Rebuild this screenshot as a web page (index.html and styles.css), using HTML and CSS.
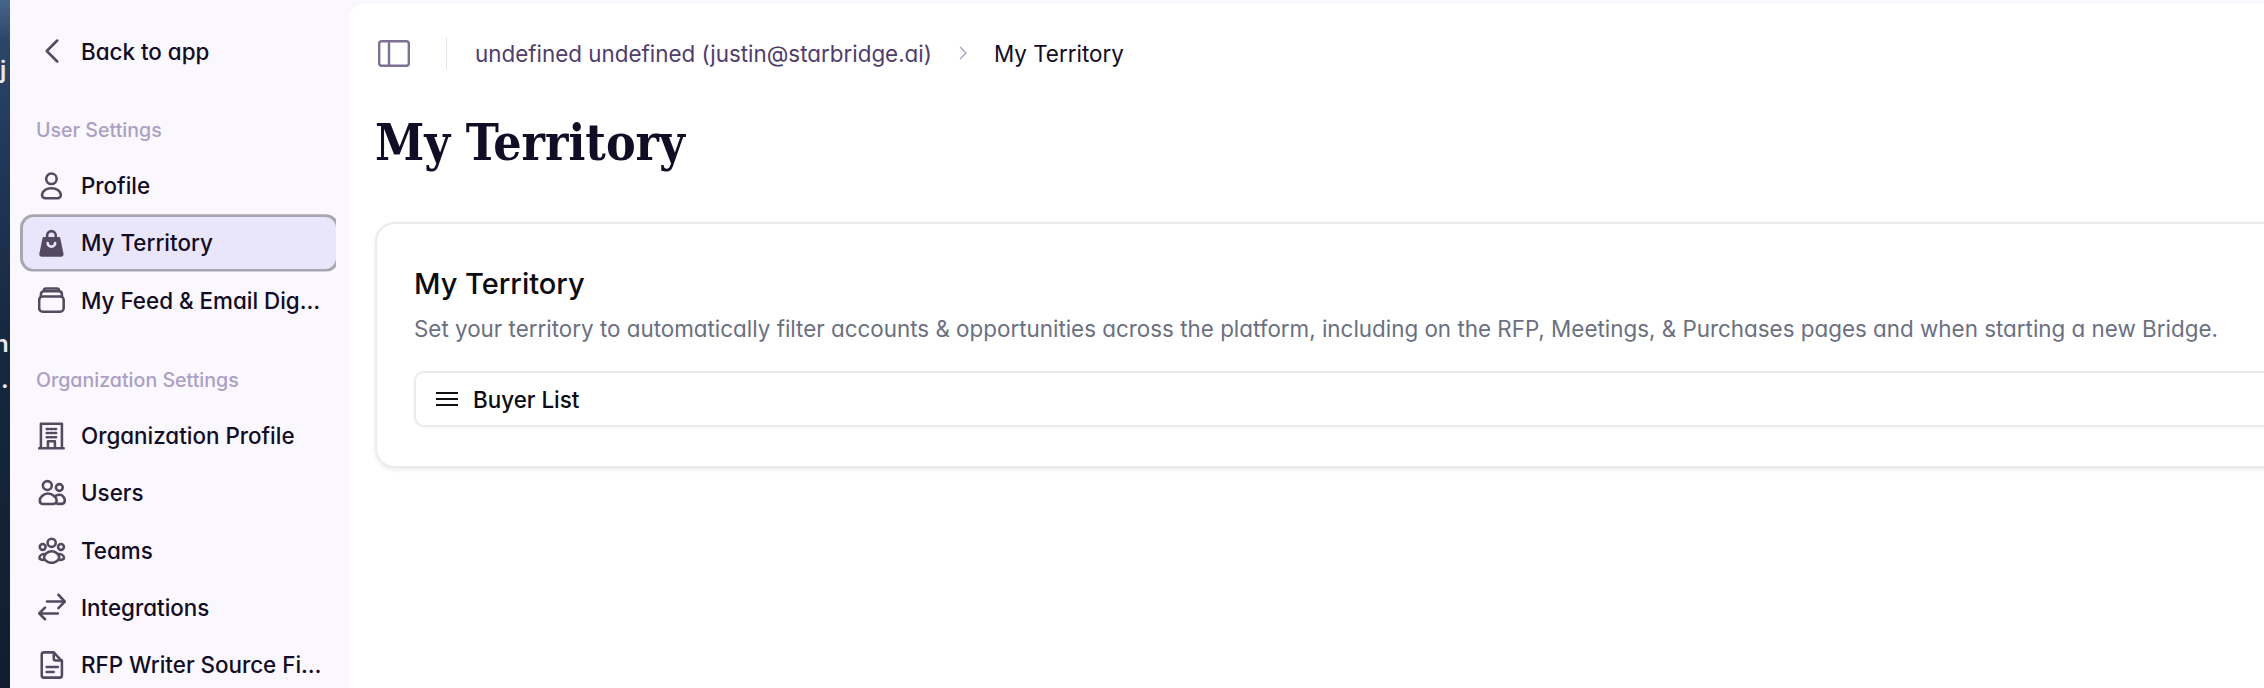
FILE: index.html
```html
<!DOCTYPE html>
<html lang="en">
<head>
    <meta charset="UTF-8">
    <meta name="viewport" content="width=device-width, initial-scale=1.0">
    <title>My Territory</title>
    <link rel="stylesheet" href="styles.css">
</head>
<body>
    <div class="desktop">
        <span class="desktop-char desktop-j">j</span>
        <span class="desktop-char desktop-n">n</span>
        <span class="desktop-char desktop-dot">.</span>
    </div>
    <aside class="sidebar">
        <a class="nav-item back">
            <svg class="icon" viewBox="0 0 24 24"><path d="M16.500 3l-9 9 9 9"/></svg>
            <span>Back to app</span>
        </a>
        <div class="group-label first">User Settings</div>
        <a class="nav-item">
            <svg class="icon" viewBox="0 0 24 24"><circle cx="11.500" cy="5.800" r="4.500"/><path d="M11.500 14c-4 0-7 2-8 5-.5 2 1 3.500 3 3.500h10c2 0 3.500-1.500 3-3.500-1-3-4-5-8-5z"/></svg>
            <span>Profile</span>
        </a>
        <a class="nav-item active">
            <svg class="icon" viewBox="0 0 24 24"><path class="solid" d="M5 8h13l2.800 13.500c.1.700-.4 1.200-1.100 1.200H3.300c-.7 0-1.200-.5-1.100-1.200z"/><path d="M7.800 8V5.500a3.700 3.700 0 0 1 7.400 0V8"/><path class="cut" d="M8.300 12a3.200 3.200 0 0 0 6.400 0"/></svg>
            <span>My Territory</span>
        </a>
        <a class="nav-item">
            <svg class="icon" viewBox="0 0 24 24"><rect x="1" y="9" width="21" height="13" rx="3"/><path d="M2.500 9V7C2.500 5.500 3.500 4.500 5 4.500h13c1.500 0 2.500 1 2.500 2.500v2M5 4.500V4c0-1 .7-1.800 1.800-1.800h9.400c1.100 0 1.800.8 1.800 1.800v.5"/></svg>
            <span class="truncate">My Feed &amp; Email Digest</span>
        </a>
        <div class="group-label">Organization Settings</div>
        <a class="nav-item">
            <svg class="icon" viewBox="0 0 24 24"><path d="M1 22.500h21M2.500 22.500V1.500h18v21M8.500 22.500v-6h6v6"/><path class="dots" d="M7.500 6H9M10.800 6h1.500M14 6h1.500M7.500 9.500H9M10.800 9.500h1.500M14 9.500h1.500M7.500 13H9M10.800 13h1.500M14 13h1.500"/></svg>
            <span>Organization Profile</span>
        </a>
        <a class="nav-item">
            <svg class="icon" viewBox="0 0 24 24"><circle cx="8" cy="5.600" r="3.800"/><circle cx="18.300" cy="7.300" r="2.900"/><path d="M8.500 12.500c-4 0-7 3.500-7 6 0 2 1 3 3 3h8c2 0 3.500-1 3.500-3 0-2.500-3.500-6-7.500-6z"/><path d="M15 14.500c1-.5 2-1 3.500-1 2.500 0 4.500 2.500 4.500 4.800 0 2-1.200 3-3 3h-3.500"/></svg>
            <span>Users</span>
        </a>
        <a class="nav-item">
            <svg class="icon" viewBox="0 0 24 24"><circle cx="11.700" cy="5.800" r="3.500"/><circle cx="4" cy="9.400" r="2.500"/><circle cx="19.700" cy="9.400" r="2.500"/><path d="M11.700 13c-3.500 0-6.500 3-6.500 5.500 0 2 3 4.500 6.500 4.500s6.500-2.500 6.500-4.500c0-2.500-3-5.500-6.500-5.500z"/><path d="M5.500 15.500c-2 0-4 1.200-4.300 3-.2 1 .8 1.800 3.800 2M18 15.500c2 0 4 1.200 4.300 3 .2 1-.8 1.800-3.800 2"/></svg>
            <span>Teams</span>
        </a>
        <a class="nav-item">
            <svg class="icon" viewBox="0 0 24 24"><path d="M7.700 7.300H23M17.500 1.500L23 7.300l-5.500 5.700M17 17.500H1M6 12.500l-5 5 5 5"/></svg>
            <span>Integrations</span>
        </a>
        <a class="nav-item">
            <svg class="icon" viewBox="0 0 24 24"><path d="M5 1.200h8.500l7 7.500V21c0 1-.9 1.800-1.800 1.800H5c-1 0-1.800-.8-1.800-1.800V3c0-1 .8-1.800 1.800-1.800z"/><path d="M13.500 1.500v5c0 1 .7 1.700 1.700 1.700h5.300M7.400 13.700H17M7.400 18h6"/></svg>
            <span class="truncate">RFP Writer Source Files</span>
        </a>
    </aside>
    <main class="main">
        <header class="topbar">
            <svg class="panel-icon" viewBox="0 0 32 27"><rect x="1.200" y="1.200" width="29.600" height="24.600" rx="2.500"/><path d="M11 1.200v24.600"/></svg>
            <div class="divider"></div>
            <span class="crumb">undefined undefined (justin@starbridge.ai)</span>
            <svg class="crumb-sep" viewBox="0 0 10 16"><path d="M2 2l6 6-6 6"/></svg>
            <span class="crumb current">My Territory</span>
        </header>
        <h1 class="page-title">My Territory</h1>
        <section class="card">
            <h2 class="card-title">My Territory</h2>
            <p class="card-text">Set your territory to automatically filter accounts &amp; opportunities across the platform, including on the RFP, Meetings, &amp; Purchases pages and when starting a new Bridge.</p>
            <div class="tab-row">
                <svg class="menu-icon" viewBox="0 0 22 16"><path d="M0 2h22M0 8h22M0 14h22"/></svg>
                <span>Buyer List</span>
            </div>
        </section>
    </main>
</body>
</html>
```

FILE: styles.css
```css
* {
    box-sizing: border-box;
}
html, body {
    height: 100%;
}
body {
    margin: 0;
    display: flex;
    overflow: hidden;
    font-family: Inter, "Noto Sans", sans-serif;
    font-feature-settings: "cv11" 1;
    background-color: #faf8fe;
    color: #120c24;
}
.desktop {
    position: relative;
    width: 10px;
    flex-shrink: 0;
    overflow: hidden;
    background: linear-gradient(180deg, #47658a 0%, #2c4668 6%, #22395c 20%, #16283f 50%, #111d2c 100%);
}
.desktop-char {
    position: absolute;
    color: #e8e8ee;
    font-size: 24px;
    line-height: 24px;
    font-weight: 600;
}
.desktop-j {
    top: 58px;
    left: 0;
}
.desktop-n {
    top: 332px;
    left: -6px;
}
.desktop-dot {
    top: 368px;
    left: 1px;
}
.sidebar {
    width: 339px;
    flex-shrink: 0;
    padding: 28px 13px 0 10px;
}
.nav-item {
    display: flex;
    align-items: center;
    gap: 15px;
    height: 57.300px;
    padding: 0 12px 0 18px;
    font-size: 22.400px;
    font-weight: 500;
    white-space: nowrap;
}
.nav-item span {
    min-width: 0;
    overflow: hidden;
}
.truncate {
    text-overflow: ellipsis;
}
.back {
    height: 46px;
}
.icon {
    width: 28px;
    height: 28px;
    flex-shrink: 0;
    fill: none;
    stroke: #544a60;
    stroke-width: 2.200;
    stroke-linecap: round;
    stroke-linejoin: round;
}
.icon .solid {
    fill: #544a60;
}
.icon .cut {
    stroke: #e9e6fb;
}
.active {
    margin-right: -3px;
    background-color: #e9e6fb;
    border: 3px solid #a8a6b0;
    border-radius: 14px;
    padding-left: 15px;
    clip-path: inset(0 3px 0 0);
}
.group-label {
    margin: 39px 0 15px 16px;
    font-size: 19.600px;
    font-weight: 500;
    color: #ab9fc4;
}
.group-label.first {
    margin-top: 44px;
}
.main {
    flex: 1;
    min-width: 0;
    margin-top: 4px;
    padding: 0 0 0 26px;
    background-color: #fff;
    border-top-left-radius: 16px;
    overflow: hidden;
}
.topbar {
    display: flex;
    align-items: center;
    height: 60px;
    margin-top: 19px;
    padding-left: 3px;
    font-size: 22.400px;
}
.panel-icon {
    width: 32px;
    height: 27px;
    fill: none;
    stroke: #7d7090;
    stroke-width: 2.400;
}
.divider {
    width: 1px;
    height: 32px;
    margin: 0 28px 0 36px;
    background-color: #e6e2f0;
}
.crumb {
    color: #503d6c;
}
.crumb.current {
    color: #120c24;
}
.crumb-sep {
    width: 10px;
    height: 16px;
    margin: 0 26px 0 26px;
    fill: none;
    stroke: #ab9fc4;
    stroke-width: 1.300;
}
.page-title {
    margin: 31px 0 0 0;
    font-family: "DejaVu Serif", serif;
    font-stretch: condensed;
    font-size: 49.500px;
    line-height: 58px;
    font-weight: 700;
    color: #120c24;
}
.card {
    width: 2000px;
    margin-top: 50px;
    padding: 43px 37px 39px 37px;
    background-color: #fff;
    border: 2px solid #ececec;
    border-radius: 20px;
    box-shadow: 0 2px 4px rgba(0, 0, 0, 0.08);
}
.card-title {
    margin: 0;
    font-size: 29px;
    line-height: 34px;
    font-weight: 500;
    color: #0b0b10;
}
.card-text {
    margin: 13px 0 0 0;
    font-size: 22.400px;
    line-height: 30px;
    color: #6b7080;
}
.tab-row {
    display: flex;
    align-items: center;
    gap: 15px;
    height: 56px;
    margin-top: 27px;
    padding-left: 20px;
    font-size: 22.400px;
    font-weight: 500;
    color: #0b0b10;
    border: 2px solid #ececec;
    border-radius: 10px;
    box-shadow: 0 1px 2px rgba(0, 0, 0, 0.05);
}
.menu-icon {
    width: 22px;
    height: 16px;
    fill: none;
    stroke: #111;
    stroke-width: 2.200;
}
```
